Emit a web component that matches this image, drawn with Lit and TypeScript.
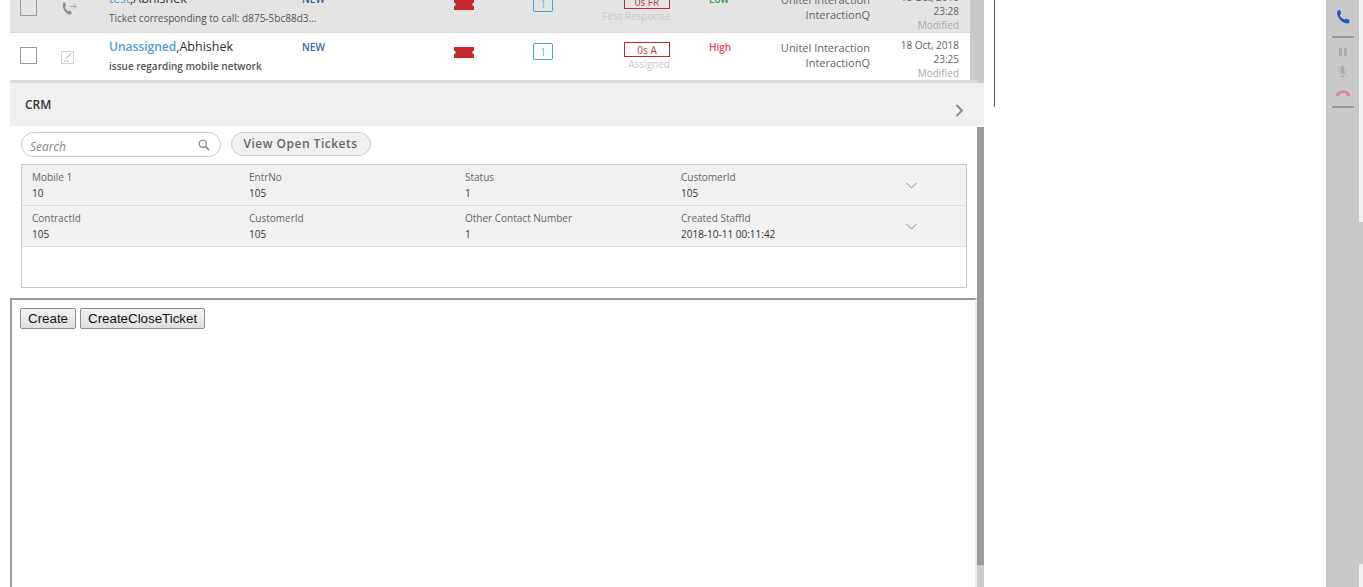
import { LitElement, html, css } from "lit";
import { customElement } from "lit/decorators.js";

const ticket = html`<svg class="ticket" viewBox="0 0 20 11" width="20" height="11"><path fill="#c9252d" d="M0 0H20V3.8A1.7 1.7 0 0 0 20 7.2V11H0V7.2A1.7 1.7 0 0 0 0 3.8Z"/></svg>`;

interface Row { name: string; rest: string; sub: string; due: string; dueLabel: string; pri: string; priCls: string; date: string; time: string; icon: unknown; cls: string }

const callIcon = html`<svg viewBox="0 0 16 14" width="16" height="14"><path fill="#8a9296" d="M2.2 .8 4 .3 5.2 3.6 4 4.8C4.3 6.6 5.4 8 7.2 9.2L8.5 8.2 11 10.4 9.8 12.6C5.4 13.2 .4 7 2.2 .8Z"/><path fill="none" stroke="#a3a9ac" stroke-width="1" d="M9 4.4H15M12.8 2 15.2 4.4 12.8 6.8"/></svg>`;
const noteIcon = html`<svg viewBox="0 0 13 13" width="13" height="13"><rect x=".5" y=".5" width="12" height="12" fill="#fff" stroke="#c9d6df"/><path fill="none" stroke="#8d979d" stroke-width="1" d="M5 7.5 10 2.5"/><path fill="none" stroke="#b5bdc2" d="M3 10H8"/></svg>`;

const rows: Row[] = [
  { name: "test", rest: ",Abhishek", sub: "Ticket corresponding to call: d875-5bc88d3...", due: "0s FR", dueLabel: "First Response", pri: "Low", priCls: "low", date: "18 Oct, 2018", time: "23:28", icon: callIcon, cls: "first" },
  { name: "Unassigned", rest: ",Abhishek", sub: "issue regarding mobile network", due: "0s A", dueLabel: "Assigned", pri: "High", priCls: "high", date: "18 Oct, 2018", time: "23:25", icon: noteIcon, cls: "second" },
];

@customElement("app-root")
export class AppRoot extends LitElement {
  static styles = css`
    :host { display: block; width: 1363px; height: 587px; overflow: hidden; background: #fff; font-family: "Open Sans", sans-serif; }
    .page { display: flex; height: 587px; }
    .main { width: 974px; margin-left: 10px; flex: none; display: flex; flex-direction: column; height: 587px; }
    .list { display: flex; flex-direction: column; height: 83px; flex: none; overflow: hidden; background: #c9c9c9; padding-right: 14px; }
    .row { flex: none; display: grid; grid-template-columns: 99px 193px 152px 79px 40px 136px 60px 101px 1fr; height: 47px; }
    .row.first { background: #e4e4e4; margin-top: -15px; border-bottom: 1px solid #d9d9d9; }
    .row.second { background: #fff; }
    .shade { height: 3px; background: #dcdcdc; flex: none; margin-right: -7px; }
    .cell-check { display: flex; align-items: flex-start; padding: 14px 0 0 10px; gap: 24px; }
    .box { width: 15px; height: 15px; border: 1px solid #9a9a9a; flex: none; background: #fff; }
    .first .box { background: #e4e4e4; }
    .kind { display: flex; }
    .second .kind { padding-top: 4px; }
    .first .kind { padding-top: 3px; }
    .who { font-size: 12.500px; line-height: 18px; padding-top: 5px; color: #333; white-space: nowrap; }
    .who a { color: #4a9fdc; font-weight: 600; font-size: 12px; }
    .first .who a { font-weight: 400; }
    .who small { display: block; font-size: 10px; line-height: 14px; color: #555; margin-top: 3px; }
    .second .who small { font-weight: 600; }
    .state { font-size: 10px; font-weight: 600; color: #2c6aa8; padding-top: 7px; line-height: 14px; }
    .tk { padding-top: 14px; line-height: 0; }
    .count { padding-top: 10px; }
    .count span { display: flex; align-items: center; justify-content: center; width: 18px; height: 15px; border: 1px solid #4aa3d8; border-radius: 2px; font-size: 10px; color: #6fb0dc; }
    .due { padding: 9px 39px 0 0; display: flex; flex-direction: column; align-items: flex-end; }
    .due b { font-weight: 400; width: 44px; height: 13px; border: 1px solid #c9252d; color: #b03a40; font-size: 10px; line-height: 14px; text-align: center; }
    .due i { font-style: normal; font-size: 10px; color: #c9c9c9; line-height: 14px; white-space: nowrap; }
    .pri { font-size: 10px; font-weight: 600; padding-top: 7px; line-height: 14px; }
    .pri.high { color: #f0455a; }
    .pri.low { color: #3a9a4a; }
    .grp { text-align: right; font-size: 11px; line-height: 15px; color: #5f6468; padding-top: 7px; white-space: nowrap; }
    .date { text-align: right; font-size: 10px; line-height: 14px; color: #5f6468; padding: 5px 11px 0 0; white-space: nowrap; }
    .date em { font-style: normal; color: #a9a9a9; display: block; }
    .date span { display: block; }
    .crm { height: 43px; background: #f0f0f0; flex: none; display: flex; align-items: flex-start; justify-content: space-between; padding: 14px 20px 0 15px; box-sizing: border-box; font-size: 12px; line-height: 16px; color: #333; font-weight: 600; }
    .crm svg { margin-top: 7px; }
    .below { flex: 1; display: flex; min-height: 0; }
    .content { flex: 1; min-width: 0; display: flex; flex-direction: column; }
    .scroll { width: 7px; flex: none; background: #9c9c9c; margin-top: 1px; display: flex; flex-direction: column; justify-content: flex-end; }
    .scroll div { height: 22px; background: #ccc; }
    .toolbar { display: flex; gap: 10px; padding: 6px 0 0 11px; align-items: flex-start; }
    .search { width: 200px; height: 25px; box-sizing: border-box; border: 1px solid #c9c9c9; border-radius: 13px; display: flex; align-items: center; justify-content: space-between; padding: 0 10px 0 8px; font-size: 12px; font-style: italic; color: #888; }
    .search span { padding-top: 3px; }
    .search svg { margin-top: 1px; }
    .view { width: 140px; height: 24px; box-sizing: border-box; border: 1px solid #c9c9c9; border-radius: 12px; background: #f0f0f0; font-size: 12px; font-weight: 600; color: #666; display: flex; align-items: center; justify-content: center; letter-spacing: .5px; padding: 0 1px 1px 0; }
    .table { margin: 7px 0 0 11px; width: 944px; height: 122px; border: 1px solid #c9c9c9; flex: none; }
    .trow { display: grid; grid-template-columns: 217px 216px 216px 225px 1fr; height: 40px; background: #f1f1f1; border-bottom: 1px solid #dcdcdc; padding-left: 10px; }
    .trow label { display: block; font-size: 10px; line-height: 14px; color: #666; padding-top: 5px; }
    .trow span { display: block; font-size: 10px; line-height: 14px; color: #333; margin-top: 2px; white-space: nowrap; }
    .chev { display: flex; padding-top: 17px; }
    .frame { margin: 10px 0 0 0; flex: 1; border-top: 2px solid #999; border-left: 2px solid #999; padding: 8px 0 0 8px; display: flex; gap: 4px; align-items: flex-start; font-family: "Liberation Sans", Arial, sans-serif; border-right: 2px solid #eee; }
    .frame button { font: 13.333px "Liberation Sans", Arial, sans-serif; color: #111; height: 21px; padding: 0 7px; border: 1px solid #8f8f8f; border-radius: 2px; background: linear-gradient(#f4f4f4, #dedede); }
    .rule { width: 1px; height: 107px; background: #555; margin-left: 10px; flex: none; }
    .spacer { flex: 1; }
    .rail { width: 33px; flex: none; background: #c9c9c9; display: flex; flex-direction: column; align-items: center; }
    .rail hr { width: 22px; height: 2px; background: #9a9a9a; border: 0; margin: 0; flex: none; }
    .rail svg { flex: none; }
    .edge { width: 4px; flex: none; display: flex; flex-direction: column; background: #f0f0f0; }
    .edge div { height: 342px; margin-top: 222px; background: #c9c9c9; }
    .ph { margin-top: 10px; }
    .pause { margin-top: 10px; }
    .mute { margin-top: 10px; }
    .hang { margin-top: 13px; }
    .rail .h1 { margin-top: 12px; }
    .rail .h2 { margin-top: 9px; }
  `;

  render() {
    return html`<div class="page">
      <div class="main">
        <div class="list">
          ${rows.map((r) => html`<div class="row ${r.cls}">
            <div class="cell-check"><div class="box"></div><div class="kind">${r.icon}</div></div>
            <div class="who"><a>${r.name}</a>${r.rest}<small>${r.sub}</small></div>
            <div class="state">NEW</div>
            <div class="tk">${ticket}</div>
            <div class="count"><span>1</span></div>
            <div class="due"><b>${r.due}</b><i>${r.dueLabel}</i></div>
            <div class="pri ${r.priCls}">${r.pri}</div>
            <div class="grp">Unitel Interaction<br />InteractionQ</div>
            <div class="date"><span>${r.date}</span><span>${r.time}</span><em>Modified</em></div>
          </div>`)}
          <div class="shade"></div>
        </div>
        <div class="crm">CRM<svg viewBox="0 0 9 13" width="9" height="13"><path fill="none" stroke="#8c8c8c" stroke-width="2" d="M1.5 1 7 6.5 1.5 12"/></svg></div>
        <div class="below">
          <div class="content">
            <div class="toolbar">
              <div class="search"><span>Search</span><svg viewBox="0 0 12 12" width="12" height="12"><circle cx="4.8" cy="4.8" r="3.6" fill="none" stroke="#777" stroke-width="1.1"/><path stroke="#777" stroke-width="1.4" d="M7.5 7.5 11 11"/></svg></div>
              <div class="view">View Open Tickets</div>
            </div>
            <div class="table">
              ${[
                [["Mobile 1", "10"], ["EntrNo", "105"], ["Status", "1"], ["CustomerId", "105"]],
                [["ContractId", "105"], ["CustomerId", "105"], ["Other Contact Number", "1"], ["Created StaffId", "2018-10-11 00:11:42"]],
              ].map((t) => html`<div class="trow">
                ${t.map((c) => html`<div><label>${c[0]}</label><span>${c[1]}</span></div>`)}
                <div class="chev"><svg viewBox="0 0 11 7" width="11" height="7"><path fill="none" stroke="#8c8c8c" stroke-width="1" d="M.5 1 5.5 6 10.5 1"/></svg></div>
              </div>`)}
            </div>
            <div class="frame"><button>Create</button><button>CreateCloseTicket</button></div>
          </div>
          <div class="scroll"><div></div></div>
        </div>
      </div>
      <div class="rule"></div>
      <div class="spacer"></div>
      <div class="rail">
        <svg class="ph" viewBox="0 0 14 14" width="14" height="14"><path fill="#1d5fa8" d="M1.6 .4 4 0 5.2 3.6 3.8 5C4.6 7 6.2 8.6 8.6 9.6L10 8.4 13.6 10 13.2 13C7.6 15 -1 7 1.6 .4Z"/></svg>
        <hr class="h1" />
        <svg class="pause" viewBox="0 0 8 8" width="8" height="8"><path fill="#ababab" d="M0 0H3V8H0ZM5 0H8V8H5Z"/></svg>
        <svg class="mute" viewBox="0 0 11 11" width="11" height="11"><path fill="#ababab" d="M3.800 1.300A1.700 1.700 0 0 1 7.200 1.300V5A1.700 1.700 0 0 1 3.800 5Z"/><path fill="none" stroke="#ababab" d="M2 4.500C2 8.500 9 8.500 9 4.500M5.500 7.500V10M3.500 10.500H7.500M.5 .5 10.500 10.500"/></svg>
        <svg class="hang" viewBox="0 0 14 7" width="14" height="7"><path fill="#dd8a96" d="M0 6C0 2 3 .5 7 .5S14 2 14 6L10.800 6.500 10 3.800C9 3 5 3 4 3.800L3.200 6.500Z"/></svg>
        <hr class="h2" />
      </div>
      <div class="edge"><div></div></div>
    </div>`;
  }
}
